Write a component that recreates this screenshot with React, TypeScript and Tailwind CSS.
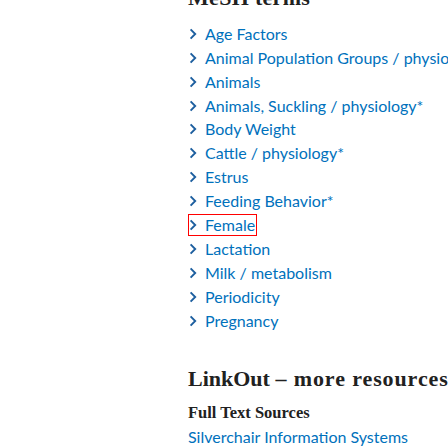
const terms = [
  'Age Factors',
  'Animal Population Groups / physiology*',
  'Animals',
  'Animals, Suckling / physiology*',
  'Body Weight',
  'Cattle / physiology*',
  'Estrus',
  'Feeding Behavior*',
  'Female',
  'Lactation',
  'Milk / metabolism',
  'Periodicity',
  'Pregnancy',
];

function Chevron() {
  return (
    <svg width="8" height="12" viewBox="0 0 8 12" className="shrink-0" aria-hidden="true">
      <path d="M1.6 1.4 L6.2 6 L1.6 10.6" fill="none" stroke="#1d5f9f" strokeWidth="1.9" strokeLinejoin="miter" />
    </svg>
  );
}

export default function App() {
  return (
    <div className="w-[448px] h-[448px] overflow-hidden bg-white flex">
      {/* left column is empty in this part of the page */}
      <div className="w-[188px] shrink-0" />

      <div className="flex-1 min-w-0 -mt-[16.4px] whitespace-nowrap">
        <h2 className="h-[28px] leading-[28px] text-[22px] font-bold tracking-[0.3px] text-[#212121] font-['Liberation_Serif',serif]">
          MeSH terms
        </h2>

        <ul className="mt-[10.3px] font-['Lato',sans-serif] text-[16px] text-[#0071bc]">
          {terms.map((t) => (
            <li key={t} className="h-[23.9px] flex items-center">
              <a
                href="#"
                className={
                  'h-[22px] inline-flex items-center gap-[8px] border ' +
                  (t === 'Female' ? 'border-[#ff0000] pr-[1px]' : 'border-transparent')
                }
              >
                <Chevron />
                <span className="leading-[20px]">{t}</span>
              </a>
            </li>
          ))}
        </ul>

        <h2 className="mt-[32.7px] h-[28px] leading-[28px] text-[22px] font-bold text-[#212121] font-['Liberation_Serif',serif]">
          LinkOut <span className="tracking-[0.9px]">– more resources</span>
        </h2>

        <h3 className="mt-[9.8px] h-[20px] leading-[20px] text-[16.5px] font-bold text-[#212121] font-['Liberation_Serif',serif]">
          Full Text Sources
        </h3>

        <a
          href="#"
          className="block mt-[3.9px] leading-[20px] text-[16px] text-[#0071bc] font-['Lato',sans-serif]"
        >
          Silverchair Information Systems
        </a>
      </div>
    </div>
  );
}
